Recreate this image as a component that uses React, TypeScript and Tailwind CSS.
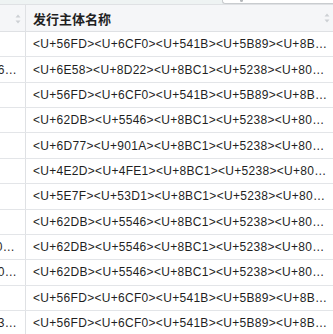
import React from 'react';

const rows: { left: string; leftPad?: string; text: string }[] = [
  { left: '', text: '<U+56FD><U+6CF0><U+541B><U+5B89><U+8B…' },
  { left: '0.056…', text: '<U+6E58><U+8D22><U+8BC1><U+5238><U+80…' },
  { left: '', text: '<U+56FD><U+6CF0><U+541B><U+5B89><U+8B…' },
  { left: '', text: '<U+62DB><U+5546><U+8BC1><U+5238><U+80…' },
  { left: '', text: '<U+6D77><U+901A><U+8BC1><U+5238><U+80…' },
  { left: '', text: '<U+4E2D><U+4FE1><U+8BC1><U+5238><U+80…' },
  { left: '', text: '<U+5E7F><U+53D1><U+8BC1><U+5238><U+80…' },
  { left: '', text: '<U+62DB><U+5546><U+8BC1><U+5238><U+80…' },
  { left: '0.030…', leftPad: 'pr-[10px]', text: '<U+62DB><U+5546><U+8BC1><U+5238><U+80…' },
  { left: '0.020…', text: '<U+62DB><U+5546><U+8BC1><U+5238><U+80…' },
  { left: '', text: '<U+56FD><U+6CF0><U+541B><U+5B89><U+8B…' },
  { left: '0.013…', text: '<U+56FD><U+6CF0><U+541B><U+5B89><U+8B…' },
];

function SortArrows() {
  return (
    <svg width="6" height="10" viewBox="0 0 6 10" className="shrink-0">
      <path d="M3 0.5 L5.5 3.5 L0.5 3.5 Z" fill="#cdd0d4" />
      <path d="M3 9.5 L5.5 6.5 L0.5 6.5 Z" fill="#cdd0d4" />
    </svg>
  );
}

export default function App() {
  return (
    <div className="w-[333px] h-[334px] overflow-hidden bg-white text-[#1f1f1f] font-['Liberation_Sans','Noto_Sans_CJK_SC',sans-serif]">
      {/* search strip */}
      <div className="h-[4px] bg-[#eef3f3] flex justify-end">
        <div className="relative w-[111px] h-[4px] bg-white border-l border-b border-[#c9cccf] rounded-bl-[3px]">
          <div className="absolute left-[17px] top-0 w-[3px] h-[2px] bg-[#b5b8bb] rounded-b-full" />
        </div>
      </div>

      {/* header */}
      <div className="flex h-[28px] bg-[#f5f6f8] border-t border-b border-[#dfe1e4]">
        <div className="w-[26px] shrink-0 border-r border-[#dfe1e4] flex items-center justify-end pr-[4px] pt-[1px]">
          <SortArrows />
        </div>
        <div className="flex-1 flex items-center justify-between pl-[7px] pr-[3px]">
          <span className="text-[13px] font-bold font-['Noto_Sans_CJK_SC',sans-serif] leading-none">发行主体名称</span>
          <SortArrows />
        </div>
      </div>

      {/* rows */}
      {rows.map((r, i) => (
        <div key={i} className="flex h-[25.36px] border-b border-[#e3e5e8] text-[12px] tracking-[0.3px]">
          <div
            className={`w-[26px] shrink-0 border-r border-[#dfe1e4] overflow-hidden flex items-center justify-end ${r.leftPad ?? 'pr-[8px]'}`}
          >
            <span className="whitespace-nowrap">{r.left}</span>
          </div>
          <div className="flex-1 flex items-center pl-[7px] overflow-hidden whitespace-nowrap">
            {r.text}
          </div>
        </div>
      ))}
    </div>
  );
}
